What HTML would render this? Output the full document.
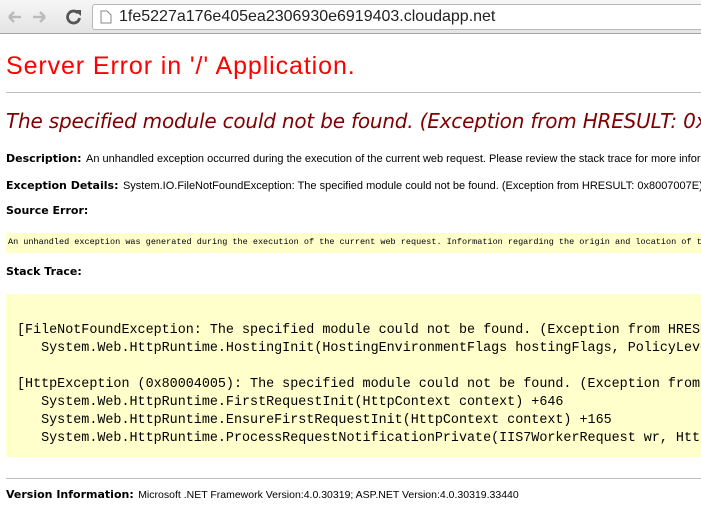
<!DOCTYPE html>
<html><head><meta charset="utf-8"><style>
html,body{margin:0;width:701px;height:523px;overflow:hidden}
body{background:#fff;position:relative;font-family:"Liberation Sans",sans-serif}
.bar{position:absolute;left:0;top:0;width:701px;height:33px;background:linear-gradient(#f6f6f6,#e4e4e4);border-bottom:1px solid #a8a8a8;overflow:hidden}
.url{position:absolute;left:92px;top:4px;width:620px;height:24px;background:#fff;border:1px solid #b8b8b8;border-radius:3px}
.url span{position:absolute;left:26px;top:3px;font-size:16px;color:#222}
.ab{position:absolute;white-space:nowrap}
.b{font-weight:bold;font-family:"DejaVu Sans",sans-serif;font-size:11px;color:#000}
.t{font-size:11px;color:#000}
.y{position:absolute;background:#ffffcc;left:6px;width:695px;overflow:hidden}
.m{font-family:"Liberation Mono",monospace;font-size:13.4px;color:#000}
hr{position:absolute;margin:0;border:0;border-top:1px solid #c0c0c0;left:6px;width:695px}
.clip{position:absolute;left:0;top:0;width:701px;height:523px;overflow:hidden}
</style></head><body><div class="clip">
<div class="bar">
<svg class="ab" style="left:6px;top:8px" width="80" height="18" viewBox="0 0 80 18">
<path d="M3 9h12M3 9l5-5M3 9l5 5" stroke="#bbb" stroke-width="2.5" fill="none"/>
<path d="M27 9h12M39 9l-5-5M39 9l-5 5" stroke="#bbb" stroke-width="2.5" fill="none"/>
<path d="M72 5a6 6 0 1 0 1.5 5" stroke="#555" stroke-width="2.8" fill="none"/>
<path d="M68 2l7 0 0 6z" fill="#555"/>
</svg>
<div class="url"><svg class="ab" style="left:7px;top:5px" width="12" height="14"><path d="M1 1h6l4 4v8H1z" fill="#fff" stroke="#888"/></svg><span>1fe5227a176e405ea2306930e6919403.cloudapp.net</span></div>
</div>
<div class="ab" style="left:6px;top:52px;font-size:25px;letter-spacing:0.9px;color:#ff0000">Server Error in '/' Application.</div>
<hr style="top:92px">
<div class="ab" style="left:6px;top:109px;font-size:20px;font-style:italic;color:#800000;font-family:'DejaVu Sans',sans-serif;letter-spacing:-0.2px">The specified module could not be found. (Exception from HRESULT: 0x8007007E)</div>
<div class="ab" style="left:6px;top:149px"><span class="b">Description:</span> <span class="t">An unhandled exception occurred during the execution of the current web request. Please review the stack trace for more information about the error.</span></div>
<div class="ab" style="left:6px;top:176px"><span class="b">Exception Details:</span> <span class="t">System.IO.FileNotFoundException: The specified module could not be found. (Exception from HRESULT: 0x8007007E)</span></div>
<div class="ab b" style="left:6px;top:204px">Source Error:</div>
<div class="y" style="top:233px;height:20px"><div class="ab" style="left:2px;top:4px;font-family:'Liberation Mono',monospace;font-size:8.5px">An unhandled exception was generated during the execution of the current web request. Information regarding the origin and location of the exception can be identified</div></div>
<div class="ab b" style="left:6px;top:265px">Stack Trace:</div>
<div class="y" style="top:294px;height:163px"><pre class="m" style="position:absolute;left:11px;top:28px;margin:0;line-height:18px">[FileNotFoundException: The specified module could not be found. (Exception from HRESULT: 0x8007007E)]
   System.Web.HttpRuntime.HostingInit(HostingEnvironmentFlags hostingFlags, PolicyLevel policyLevel)

[HttpException (0x80004005): The specified module could not be found. (Exception from HRESULT)]
   System.Web.HttpRuntime.FirstRequestInit(HttpContext context) +646
   System.Web.HttpRuntime.EnsureFirstRequestInit(HttpContext context) +165
   System.Web.HttpRuntime.ProcessRequestNotificationPrivate(IIS7WorkerRequest wr, HttpContext context)</pre></div>
<hr style="top:478px">
<div class="ab" style="left:6px;top:485px"><span class="b">Version Information:</span> <span class="t" style="font-size:10.5px">Microsoft .NET Framework Version:4.0.30319; ASP.NET Version:4.0.30319.33440</span></div>
</div></body></html>
